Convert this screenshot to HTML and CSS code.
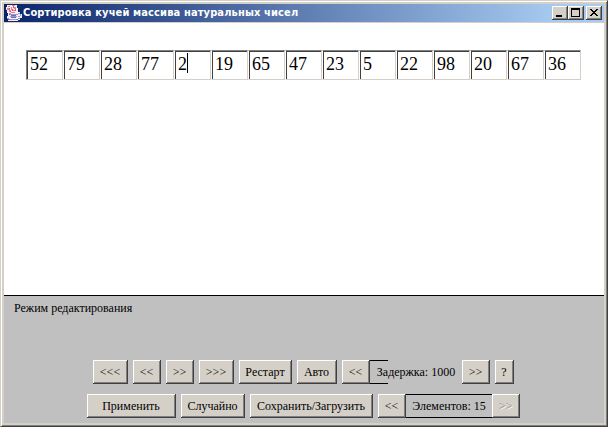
FILE: index.html
```html
<!DOCTYPE html>
<html lang="ru">
<head>
<meta charset="utf-8">
<title>Сортировка кучей массива натуральных чисел</title>
<link rel="stylesheet" href="styles.css">
</head>
<body>
<div class="window">
  <header class="titlebar">
    <svg class="logo" width="16" height="16" viewBox="0 0 16 16" shape-rendering="crispEdges">
      <path fill="#f4eef6" d="M1 0h10v3h1v4h2v2h2v4h-2v2h-2v1H2v-2H1v-3h1V8H1V5H0V2h1z"/>
      <path fill="#e8808c" d="M2 1h2v1H2zM6 0h3v1H6zM1 3h2v2H1zM5 2h1v3H5zM8 2h2v2H8zM3 5h2v2H3zM7 5h3v1H7zM5 7h4v1H5z"/>
      <path fill="#e05068" d="M7 1h1v2H7zM3 3h1v2H3zM6 4h1v2H6zM9 4h1v2H9zM4 6h1v1H4z"/>
      <path fill="#9a96d0" d="M3 8h2v1H3zM4 9h8v1H4zM12 8h2v1h-2zM14 9h1v2h-1zM12 11h2v1h-2zM4 11h7v1H4zM1 13h2v1H1zM3 14h8v1H3zM12 13h2v1h-2z"/>
      <path fill="#6c6cb4" d="M3 9h1v1H3zM5 10h5v1H5zM5 12h5v1H5zM2 14h2v1H2zM11 14h1v1h-1z"/>
    </svg>
    <h1 class="caption">Сортировка кучей массива натуральных чисел</h1>
    <div class="controls">
      <button class="control"><svg width="16" height="14" shape-rendering="crispEdges"><path d="M4 9h6v2H4z"/></svg></button>
      <button class="control"><svg width="16" height="14" shape-rendering="crispEdges"><path fill-rule="evenodd" d="M3 2h9v9H3zM4 4v6h7V4z"/></svg></button>
      <button class="control close"><svg width="16" height="14" shape-rendering="crispEdges"><path d="M4 3h2v1h1v1h2V4h1V3h2v1h-1v1h-1v1H9v1h1v1h1v1h1v1h-2V9H9V8H7v1H6v1H4V9h1V8h1V7h1V6H6V5H5V4H4z"/></svg></button>
    </div>
  </header>
  <main class="canvas">
    <div class="cells">
      <div class="cell">52</div><div class="cell">79</div><div class="cell">28</div><div class="cell">77</div><div class="cell active">2</div><div class="cell">19</div><div class="cell">65</div><div class="cell">47</div><div class="cell">23</div><div class="cell">5</div><div class="cell">22</div><div class="cell">98</div><div class="cell">20</div><div class="cell">67</div><div class="cell">36</div>
    </div>
  </main>
  <section class="panel">
    <p class="status">Режим редактирования</p>
    <div class="row">
      <button class="btn w35">&lt;&lt;&lt;</button>
      <button class="btn w28">&lt;&lt;</button>
      <button class="btn w28">&gt;&gt;</button>
      <button class="btn w35">&gt;&gt;&gt;</button>
      <button class="btn w53">Рестарт</button>
      <button class="btn w40">Авто</button>
      <div class="group delay">
        <button class="btn w28">&lt;&lt;</button>
        <span class="label">Задержка: 1000</span>
        <button class="btn w28">&gt;&gt;</button>
      </div>
      <button class="btn w19">?</button>
    </div>
    <div class="row">
      <button class="btn w89">Применить</button>
      <button class="btn w64">Случайно</button>
      <button class="btn w123">Сохранить/Загрузить</button>
      <div class="group count">
        <button class="btn w28">&lt;&lt;</button>
        <span class="label">Элементов: 15</span>
        <button class="btn w28" disabled>&gt;&gt;</button>
      </div>
    </div>
  </section>
</div>
</body>
</html>
```

FILE: styles.css
```css
* { box-sizing: border-box; }

body {
  margin: 0;
  font: 12px/14px "Liberation Serif", serif;
  color: #000;
}

button { padding: 0; margin: 0; font: inherit; color: inherit; border-radius: 0; }

.window {
  display: flex;
  flex-direction: column;
  width: 608px;
  height: 427px;
  padding: 3px;
  background: #d4d0c8;
  border: 1px solid;
  border-color: #d4d0c8 #404040 #404040 #d4d0c8;
  box-shadow: inset 1px 1px #fff, inset -1px -1px #808080;
}

.titlebar {
  display: flex;
  flex: none;
  align-items: center;
  height: 18px;
  padding: 0 2px;
  background: linear-gradient(90deg, #0a246a, #a6caf0 92%);
}

.logo { display: block; flex: none; }

.caption {
  flex: 1;
  margin: 0 0 0 1px;
  color: #fff;
  font: bold 11px/18px "DejaVu Sans Condensed", "DejaVu Sans", sans-serif;
  font-stretch: condensed;
  letter-spacing: 0.13px;
  white-space: nowrap;
}

.controls { display: flex; }

.control {
  width: 16px;
  height: 14px;
  background: #d4d0c8;
  border: 0;
  box-shadow: inset -1px -1px #404040, inset 1px 1px #fff, inset -2px -2px #808080;
}

.control svg { display: block; }
.close { margin-left: 2px; }

.canvas {
  flex: none;
  height: 272px;
  margin-top: 1px;
  padding: 27px 22px;
  background: #fff;
}

.cells { display: flex; }

.cell {
  width: 37px;
  height: 30px;
  padding: 1px 0 0 3px;
  border: 1px solid;
  border-color: #808080 #d4d0c8 #d4d0c8 #fff;
  box-shadow: inset 1px 1px #404040;
  font-size: 18px;
  line-height: 24px;
}

.cell:first-child { border-left-color: #808080; }

.active::after {
  content: "";
  display: inline-block;
  width: 1px;
  height: 20px;
  background: #000;
  vertical-align: -3px;
}

.panel {
  flex: 1;
  background: #c0c0c0;
  border-top: 1px solid #000;
}

.status {
  height: 64px;
  margin: 0;
  padding: 5px 0 0 10px;
}

.row {
  display: flex;
  justify-content: center;
  gap: 5px;
  height: 24px;
  padding-right: 1px;
  white-space: nowrap;
}

.row + .row { margin-top: 10px; }

.btn {
  display: flex;
  align-items: center;
  justify-content: center;
  flex: none;
  height: 24px;
  padding-right: 1px;
  background: #d4d0c8;
  border: 0;
  box-shadow: inset -1px -1px #404040, inset 1px 1px #fff, inset -2px -2px #808080;
}

.btn:disabled { color: #808080; text-shadow: 1px 1px #fff; }

.w19 { width: 19px; }
.w28 { width: 28px; }
.w35 { width: 35px; }
.w40 { width: 40px; }
.w53 { width: 53px; }
.w64 { width: 64px; }
.w89 { width: 89px; }
.w123 { width: 123px; }

.group { display: flex; }

.label {
  height: 24px;
  line-height: 24px;
  text-align: center;
}

.delay .label {
  width: 92px;
  background:
    linear-gradient(#000, #000) 0 0 / 18px 1px no-repeat,
    linear-gradient(#000, #000) 0 100% / 18px 1px no-repeat;
}

.count .label {
  width: 86px;
  border: solid #000;
  border-width: 1px 0;
  line-height: 22px;
}
```
